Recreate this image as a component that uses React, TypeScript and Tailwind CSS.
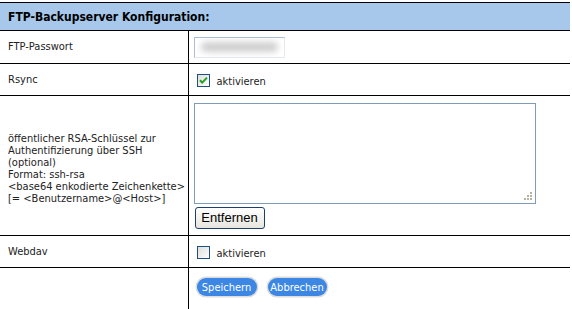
import React from 'react'

const label = "pl-2 pr-2 text-[11px] leading-[12px] text-[#222] align-middle whitespace-nowrap"
const cell = "pl-[5px] align-middle border-l border-black"

function Check({ on }: { on?: boolean }) {
    return (
        <svg width="13" height="13" viewBox="0 0 13 13" className="shrink-0">
            <defs>
                <linearGradient id="cb" x1="0" y1="0" x2="1" y2="1">
                    <stop offset="0" stopColor="#dcdcd7" />
                    <stop offset="1" stopColor="#ffffff" />
                </linearGradient>
            </defs>
            <rect x="0.5" y="0.5" width="12" height="12" fill="url(#cb)" stroke="#1c5180" />
            {on && <path d="M3 6.2 L5.2 8.6 L10 3.6" fill="none" stroke="#21a121" strokeWidth="2" />}
        </svg>
    )
}

function Toggle({ on }: { on?: boolean }) {
    return (
        <div className="flex items-center gap-[7px] pl-[3px] pt-[2px]">
            <Check on={on} />
            <span className="text-[11px] text-[#222] pt-[3px]">aktivieren</span>
        </div>
    )
}

export default function App() {
    return (
        <div className="w-[572px] h-[309px] bg-white overflow-hidden pt-[2px] font-['DejaVu_Sans_Condensed','DejaVu_Sans',sans-serif]">

            <table className="w-[570px] border-collapse table-fixed">
                <colgroup>
                    <col className="w-[188px]" />
                    <col />
                </colgroup>
                <tbody>

                    {/* Header */}
                    <tr className="h-[28px] bg-[#a7c8ea] border-y border-black">
                        <td colSpan={2} className="pl-2 text-[12px] font-bold text-black align-middle">
                            FTP-Backupserver Konfiguration:
                        </td>
                    </tr>

                    <tr className="h-[33px] border-b border-black">
                        <td className={label}>FTP-Passwort</td>
                        <td className={cell}>
                            <div className="w-[91px] h-[21px] border border-[#a9bfd6] border-r-[#e3e9ef] border-b-[#e3e9ef] bg-white flex items-center px-[6px] overflow-hidden">
                                <div className="w-full h-[10px] rounded-full bg-[#cfcfcf] blur-[3px]" />
                            </div>
                        </td>
                    </tr>

                    <tr className="h-[32px] border-b border-black">
                        <td className={label}>Rsync</td>
                        <td className={cell}><Toggle on /></td>
                    </tr>

                    <tr className="h-[140px] border-b border-black">
                        <td className={label + " pt-[6px]"}>
                            öffentlicher RSA-Schlüssel zur<br />
                            Authentifizierung über SSH<br />
                            (optional)<br />
                            Format: ssh-rsa<br />
                            &lt;base64 enkodierte Zeichenkette&gt;<br />
                            [= &lt;Benutzername&gt;@&lt;Host&gt;]
                        </td>
                        <td className={cell}>
                            <div className="flex flex-col items-start gap-[3px]">
                                <div className="relative w-[342px] h-[101px] border border-[#7f9db9] bg-white">
                                    <svg width="8" height="8" viewBox="0 0 8 8" className="absolute right-[3px] bottom-[3px]">
                                        <g fill="#b5b2a4">
                                            <rect x="6" y="0" width="2" height="2" />
                                            <rect x="3" y="3" width="2" height="2" />
                                            <rect x="6" y="3" width="2" height="2" />
                                            <rect x="0" y="6" width="2" height="2" />
                                            <rect x="3" y="6" width="2" height="2" />
                                            <rect x="6" y="6" width="2" height="2" />
                                        </g>
                                    </svg>
                                </div>
                                <button className="ml-[1px] w-[70px] h-[22px] rounded-[3px] border border-[#1d3f6e] bg-gradient-to-b from-white to-[#e6e5de] text-[13px] text-black font-['Liberation_Sans',sans-serif]">
                                    Entfernen
                                </button>
                            </div>
                        </td>
                    </tr>

                    <tr className="h-[32px] border-b border-black">
                        <td className={label}>Webdav</td>
                        <td className={cell}><Toggle /></td>
                    </tr>

                    <tr className="h-[43px]">
                        <td />
                        <td className={cell + " align-top pt-[10px]"}>
                            <div className="flex gap-[11px] pl-[3px]">
                                <button className="w-[60px] h-[18px] rounded-full bg-[#3c86e4] text-white text-[11px] leading-none shadow-[0_0_0_1.5px_#dcdcdc]">
                                    Speichern
                                </button>
                                <button className="w-[59px] h-[18px] rounded-full bg-[#3c86e4] text-white text-[11px] leading-none shadow-[0_0_0_1.5px_#dcdcdc]">
                                    Abbrechen
                                </button>
                            </div>
                        </td>
                    </tr>

                </tbody>
            </table>

        </div>
    )
}
